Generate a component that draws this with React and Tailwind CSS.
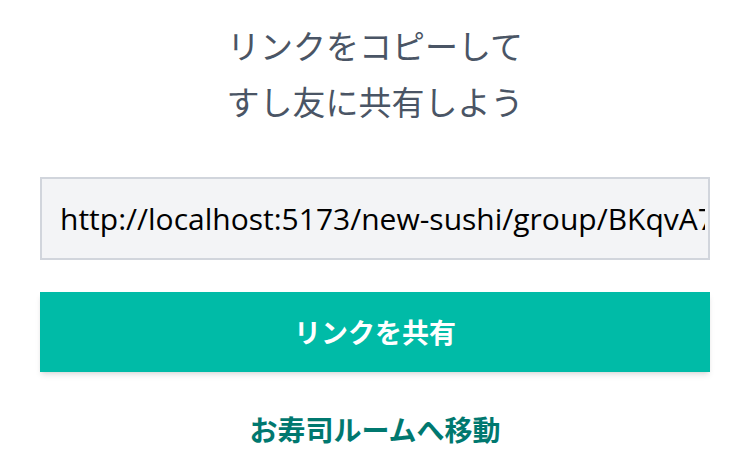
export default function App() {
  return (
    <div className="min-h-screen bg-white px-10 pt-[17px] font-['Noto_Sans_CJK_JP',sans-serif]">
      <h1 className="text-center text-[33px] leading-[56px] font-normal text-gray-600">
        リンクをコピーして
        <br />
        すし友に共有しよう
      </h1>
      <div className="mt-[48px] flex h-[83px] items-center overflow-hidden border-2 border-gray-300 bg-gray-100 pl-[18px] pr-[3px]">
        <input
          readOnly
          value="http://localhost:5173/new-sushi/group/BKqvA7xQ2mZ"
          className="w-full bg-transparent font-['Open_Sans',sans-serif] text-[30px] text-black outline-none"
        />
      </div>
      <button className="mt-[32px] flex h-[80px] w-full items-center justify-center bg-teal-500 text-[27px] font-bold text-white shadow-md">
        リンクを共有
      </button>
      <div className="mt-[36px] text-center">
        <a href="#" className="text-[28px] font-bold text-teal-700">
          お寿司ルームへ移動
        </a>
      </div>
    </div>
  );
}
